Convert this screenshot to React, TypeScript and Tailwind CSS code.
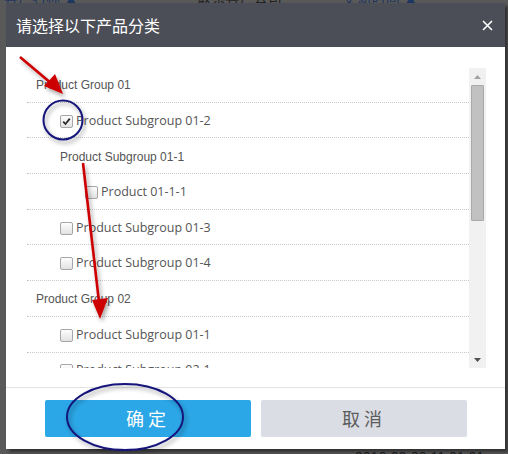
import React from 'react';

type Row = {
  label: string;
  kind: 'group' | 'sub' | 'check';
  pad: string;
  checked?: boolean;
};

const rows: Row[] = [
  { label: 'Product Group 01', kind: 'group', pad: 'pl-[9px]' },
  { label: 'Product Subgroup 01-2', kind: 'check', pad: 'pl-[33px]', checked: true },
  { label: 'Product Subgroup 01-1', kind: 'sub', pad: 'pl-[33px]' },
  { label: 'Product 01-1-1', kind: 'check', pad: 'pl-[58px]' },
  { label: 'Product Subgroup 01-3', kind: 'check', pad: 'pl-[33px]' },
  { label: 'Product Subgroup 01-4', kind: 'check', pad: 'pl-[33px]' },
  { label: 'Product Group 02', kind: 'group', pad: 'pl-[9px]' },
  { label: 'Product Subgroup 01-1', kind: 'check', pad: 'pl-[33px]' },
  { label: 'Product Subgroup 02-1', kind: 'check', pad: 'pl-[33px]' },
];

function Checkbox({ checked }: { checked?: boolean }) {
  return (
    <span className="flex h-[13px] w-[13px] items-center justify-center rounded-[2px] border border-[#a6a6a6] bg-gradient-to-b from-[#fdfdfd] to-[#e2e2e2]">
      {checked && (
        <svg width="9" height="9" viewBox="0 0 9 9">
          <path d="M1.2 4.6 L3.5 7 L7.8 1.6" fill="none" stroke="#2b2b2b" strokeWidth="1.8" />
        </svg>
      )}
    </span>
  );
}

function Annotations() {
  return (
    <svg className="pointer-events-none absolute inset-0" width="508" height="454" viewBox="0 0 508 454">
      <defs>
        <filter id="sh" x="-20%" y="-20%" width="140%" height="140%">
          <feDropShadow dx="2" dy="3" stdDeviation="2" floodColor="#000" floodOpacity="0.35" />
        </filter>
      </defs>
      <g filter="url(#sh)">
        <line x1="20" y1="57" x2="52" y2="84" stroke="#cc0000" strokeWidth="2.6" />
        <polygon points="63,94 44,86 55,74" fill="#cc0000" />
        <line x1="83" y1="163" x2="99" y2="302" stroke="#cc0000" strokeWidth="2.6" />
        <polygon points="100,319 92,300 108,298" fill="#cc0000" />
        <circle cx="63" cy="120" r="19.5" fill="none" stroke="#14147a" strokeWidth="2" />
        <ellipse cx="125" cy="417" rx="58" ry="33" fill="none" stroke="#14147a" strokeWidth="2" />
      </g>
    </svg>
  );
}

export default function App() {
  return (
    <div className="relative h-[454px] w-[508px] overflow-hidden bg-[#595959] font-['Liberation_Sans','Noto_Sans_CJK_SC',sans-serif]">
      {/* dimmed page behind the dialog */}
      <div className="flex h-full flex-col justify-between">
        <div className="-mt-[10px] flex text-[14px] leading-[16px] text-[#1c3660]">
          <span className="pl-[4px]">客户名称 ▲</span>
          <span className="pl-[120px] text-[#222]">联系客户公司</span>
          <span className="pl-[62px]">更新时间 ▲</span>
        </div>
        <div className="-mb-[11px] flex justify-end pr-[24px] text-[14px] leading-[16px] text-[#1f1f1f]">
          2016-02-09 11:01:01
        </div>
      </div>

      {/* dialog */}
      <div className="absolute left-[6px] top-[3px] flex h-[446px] w-[499px] flex-col bg-white shadow-[3px_3px_3px_rgba(0,0,0,0.45)]">
        <div className="flex h-[44px] items-center justify-between bg-[#4b4e56] pl-[10px] pr-[12px]">
          <span className="font-['Noto_Sans_CJK_SC',sans-serif] text-[16px] text-white">请选择以下产品分类</span>
          <svg width="11" height="11" viewBox="0 0 11 11">
            <path d="M1 1 L10 10 M10 1 L1 10" stroke="#fff" strokeWidth="1.6" />
          </svg>
        </div>

        <div className="flex pl-[21px] pr-[19px] pt-[20px]">
          <div className="h-[301px] flex-1 overflow-hidden">
            {rows.map((r, i) => (
              <div
                key={i}
                className={`box-border flex h-[35.7px] items-center border-b border-dotted border-[#c9c9c9] pt-[2px] text-[#555] ${r.pad}`}
              >
                {r.kind === 'check' ? (
                  <div className="flex items-center gap-[3px] font-['Open_Sans',sans-serif] text-[12.5px]">
                    <Checkbox checked={r.checked} />
                    <span>{r.label}</span>
                  </div>
                ) : (
                  <span className="text-[12px]">{r.label}</span>
                )}
              </div>
            ))}
          </div>
          <div className="mt-[1px] flex h-[300px] w-[17px] flex-col bg-[#f1f1f1]">
            <div className="flex h-[17px] items-center justify-center">
              <svg width="7" height="4" viewBox="0 0 7 4">
                <polygon points="3.5,0 7,4 0,4" fill="#a3a3a3" />
              </svg>
            </div>
            <div className="mx-[2px] h-[136px] rounded-[1px] border border-[#a9a9a9] bg-[#c1c1c1]" />
            <div className="flex-1" />
            <div className="flex h-[17px] items-center justify-center">
              <svg width="7" height="4" viewBox="0 0 7 4">
                <polygon points="0,0 7,0 3.5,4" fill="#505050" />
              </svg>
            </div>
          </div>
        </div>

        <div className="mt-[19px] border-t border-[#e3e3e3]" />

        <div className="flex gap-[10px] pl-[39px] pr-[38px] pt-[12px] font-['Noto_Sans_CJK_SC',sans-serif] text-[18px]">
          <button className="flex h-[37px] flex-1 items-center justify-center rounded-[2px] bg-[#2ba6e6] tracking-[4px] text-white">
            确定
          </button>
          <button className="flex h-[37px] flex-1 items-center justify-center rounded-[2px] bg-[#dadde4] tracking-[4px] text-[#5c5c5c]">
            取消
          </button>
        </div>
      </div>

      <Annotations />
    </div>
  );
}
